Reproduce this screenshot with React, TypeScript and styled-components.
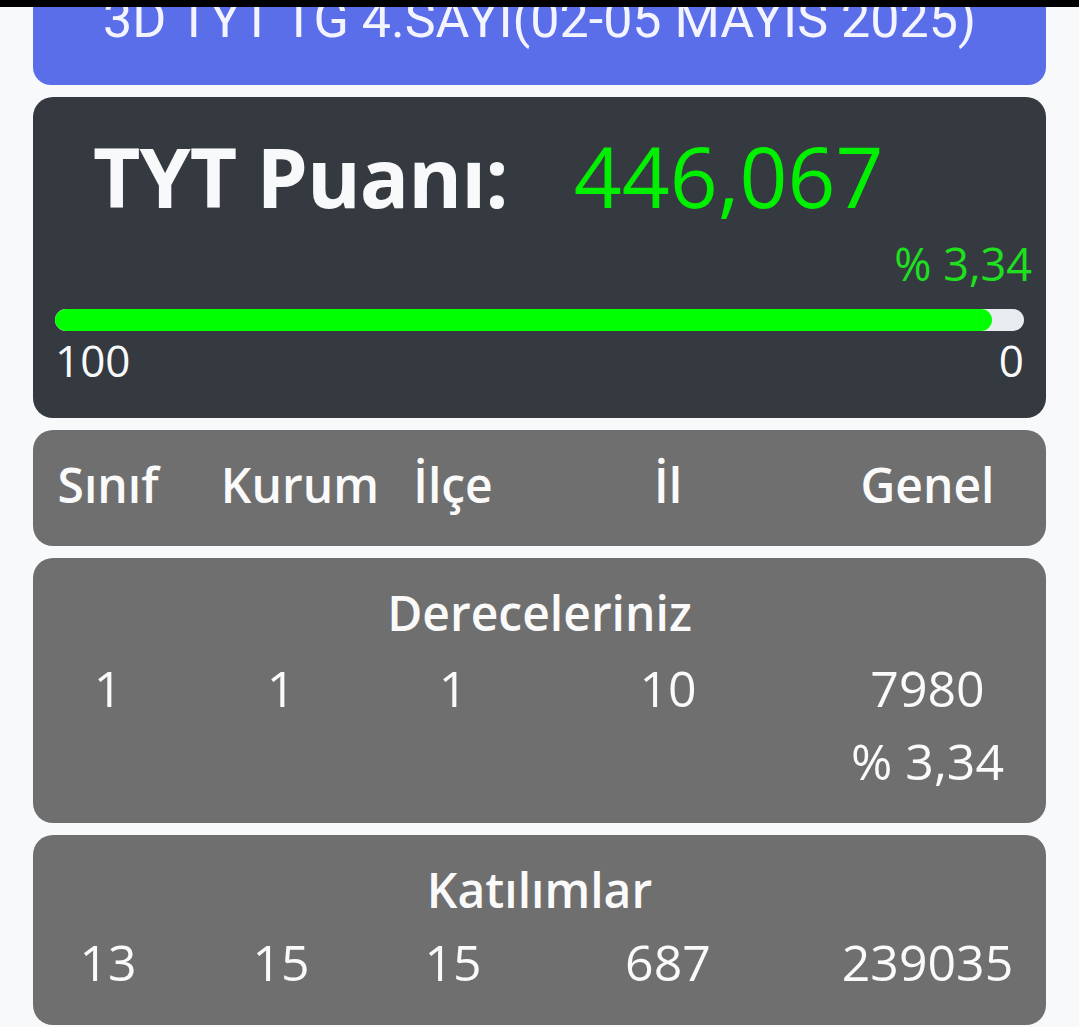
import React from "react";
import styled, { createGlobalStyle } from "styled-components";

const GlobalStyle = createGlobalStyle`
  html, body {
    margin: 0;
    padding: 0;
    background: #f8f9fa;
  }
  body {
    font-family: "Open Sans", "Noto Sans", sans-serif;
    overflow: hidden;
  }
`;

const StatusBar = styled.div`
  position: fixed;
  top: 0;
  left: 0;
  right: 0;
  height: 7px;
  background: #000;
  z-index: 10;
`;

const Page = styled.main`
  display: flex;
  flex-direction: column;
  gap: 12px;
  padding: 0 33px;
`;

const ExamBanner = styled.header`
  margin-top: -26px;
  background: #5b6ee9;
  border-radius: 0 0 18px 18px;
  padding: 20px 16px 39px;
  text-align: center;
  color: #f3f4ff;
  font-family: Roboto, "Liberation Sans", sans-serif;
  font-size: 52px;
  line-height: 1;
  white-space: nowrap;
`;

const ScoreCard = styled.section`
  background: #343a40;
  border-radius: 20px;
  padding: 37px 22px 36px;
  display: flex;
  flex-direction: column;
`;

const ScoreRow = styled.div`
  display: flex;
  align-items: baseline;
  gap: 66px;
  margin-left: 38px;
  line-height: 1;
`;

const ScoreLabel = styled.span`
  font-size: 82px;
  font-weight: 700;
  color: #f8f9fa;
  letter-spacing: -1px;
`;

const ScoreValue = styled.span`
  font-size: 84px;
  font-weight: 400;
  color: #00f000;
`;

const Percent = styled.div`
  margin-top: 23px;
  margin-right: -8px;
  text-align: right;
  font-size: 45px;
  line-height: 1;
  color: #1ee01e;
`;

const Track = styled.div`
  margin-top: 23px;
  height: 22px;
  border-radius: 11px;
  background: #e9ecef;
  overflow: hidden;
`;

const Fill = styled.div`
  height: 100%;
  border-radius: 11px;
  background: #00ff00;
`;

const Scale = styled.div`
  margin-top: 7px;
  display: flex;
  justify-content: space-between;
  font-size: 44px;
  line-height: 1;
  color: #f8f9fa;
`;

const GrayCard = styled.section<{ $pt: number; $pb: number }>`
  background: #6f6f6f;
  border-radius: 20px;
  padding: ${(p) => p.$pt}px 0 ${(p) => p.$pb}px;
  color: #fafafa;
  display: flex;
  flex-direction: column;
`;

const Columns = styled.div<{ $gap?: number }>`
  display: grid;
  grid-template-columns: 150px 196px 148px 282px 1fr;
  margin-top: ${(p) => p.$gap ?? 0}px;
  font-size: 50px;
  line-height: 1;
`;

const HeadCell = styled.span<{ $align?: string }>`
  justify-self: ${(p) => p.$align ?? "center"};
  font-weight: 600;
  font-size: 48px;
`;

const ValueCell = styled.span<{ $col?: number }>`
  justify-self: center;
  grid-column: ${(p) => p.$col ?? "auto"};
  font-weight: 400;
`;

const CardTitle = styled.h2`
  margin: 0;
  text-align: center;
  font-size: 48px;
  font-weight: 600;
  line-height: 1;
`;

const headers: { label: string; align?: string }[] = [
  { label: "Sınıf" },
  { label: "Kurum", align: "end" },
  { label: "İlçe" },
  { label: "İl" },
  { label: "Genel" },
];

const ranks = ["1", "1", "1", "10", "7980"];
const participants = ["13", "15", "15", "687", "239035"];

const percentile = 3.34;

export default function App() {
  return (
    <>
      <GlobalStyle />
      <StatusBar />
      <Page>
        <ExamBanner>3D TYT TG 4.SAYI(02-05 MAYIS 2025)</ExamBanner>

        <ScoreCard>
          <ScoreRow>
            <ScoreLabel>TYT Puanı:</ScoreLabel>
            <ScoreValue>446,067</ScoreValue>
          </ScoreRow>
          <Percent>% 3,34</Percent>
          <Track>
            <Fill style={{ width: `${100 - percentile}%` }} />
          </Track>
          <Scale>
            <span>100</span>
            <span>0</span>
          </Scale>
        </ScoreCard>

        <GrayCard $pt={31} $pb={37}>
          <Columns>
            {headers.map((h) => (
              <HeadCell key={h.label} $align={h.align}>
                {h.label}
              </HeadCell>
            ))}
          </Columns>
        </GrayCard>

        <GrayCard $pt={31} $pb={37}>
          <CardTitle>Dereceleriniz</CardTitle>
          <Columns $gap={26}>
            {ranks.map((r, i) => (
              <ValueCell key={i}>{r}</ValueCell>
            ))}
          </Columns>
          <Columns $gap={23}>
            <ValueCell $col={5}>% 3,34</ValueCell>
          </Columns>
        </GrayCard>

        <GrayCard $pt={31} $pb={38}>
          <CardTitle>Katılımlar</CardTitle>
          <Columns $gap={23}>
            {participants.map((r, i) => (
              <ValueCell key={i}>{r}</ValueCell>
            ))}
          </Columns>
        </GrayCard>
      </Page>
    </>
  );
}
